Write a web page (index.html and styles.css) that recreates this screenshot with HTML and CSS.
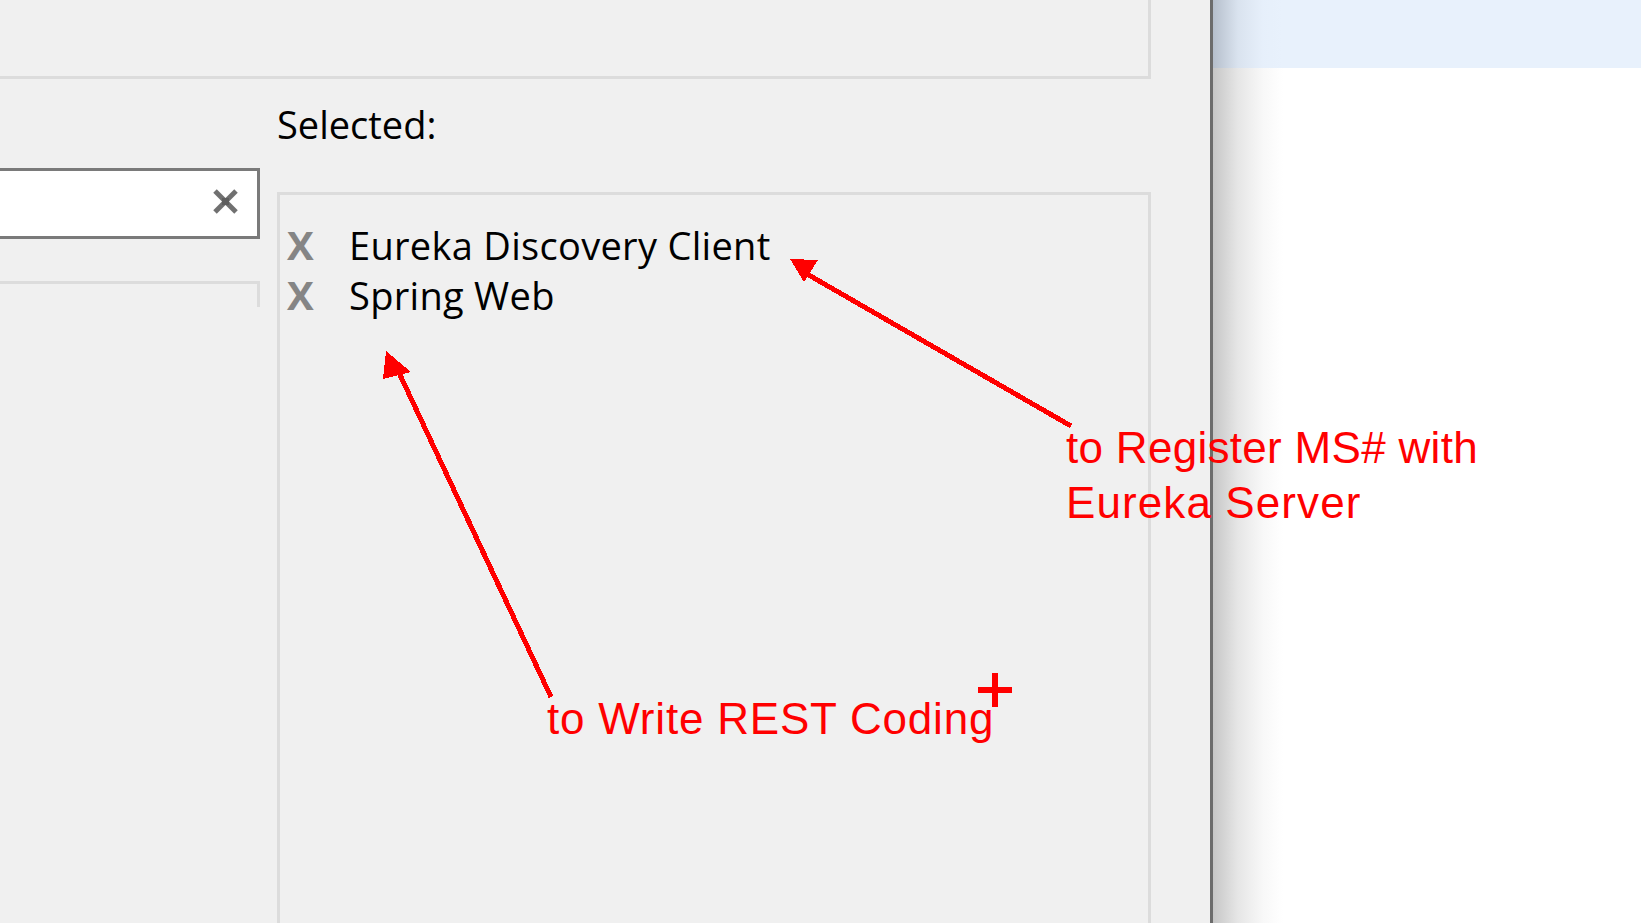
FILE: index.html
```html
<!DOCTYPE html>
<html>
<head>
<meta charset="utf-8">
<link rel="stylesheet" href="styles.css">
</head>
<body>
<div class="screen">
  <div class="dialog">
    <div class="top-panel"></div>
    <div class="content">
      <div class="left-col">
        <div class="search">
          <svg class="clear-icon" width="27" height="27" viewBox="0 0 27 27">
            <line x1="3" y1="3" x2="24" y2="24" stroke="#707070" stroke-width="5"/>
            <line x1="24" y1="3" x2="3" y2="24" stroke="#707070" stroke-width="5"/>
            <rect x="10" y="10" width="7" height="7" fill="#5e5e5e"/>
          </svg>
        </div>
        <div class="list-panel"></div>
      </div>
      <div class="right-col">
        <div class="sel-label">Selected:</div>
        <div class="sel-panel">
          <div class="sel-item"><span class="sel-x">X</span><span class="sel-name">Eureka Discovery Client</span></div>
          <div class="sel-item"><span class="sel-x">X</span><span class="sel-name">Spring Web</span></div>
        </div>
      </div>
    </div>
  </div>
  <div class="divider"></div>
  <div class="side">
    <div class="side-band"></div>
  </div>

  <svg class="arrows" width="1641" height="923" viewBox="0 0 1641 923" shape-rendering="crispEdges">
    <line x1="1071" y1="426" x2="800" y2="270" stroke="#ff0000" stroke-width="5"/>
    <polygon points="790,259 818,260 804,282" fill="#ff0000"/>
    <line x1="551" y1="697" x2="394" y2="362" stroke="#ff0000" stroke-width="5"/>
    <polygon points="386,351 411,372 383,379" fill="#ff0000"/>
    <rect x="978" y="687" width="34" height="6" fill="#ff0000"/>
    <rect x="992" y="673" width="6" height="34" fill="#ff0000"/>
  </svg>
  <div class="note note-register"><span class="note-line line-a">to Register MS# with</span><span class="note-line line-b">Eureka Server</span></div>
  <div class="note note-rest">to Write REST Coding</div>
</div>
</body>
</html>
```

FILE: styles.css
```css
html, body {
  margin: 0;
  padding: 0;
  width: 1641px;
  height: 923px;
  overflow: hidden;
  background: #ffffff;
}

.screen {
  position: relative;
  display: flex;
  width: 1641px;
  height: 923px;
  overflow: hidden;
}

.dialog {
  width: 1210px;
  flex: 0 0 1210px;
  background: #f0f0f0;
  display: flex;
  flex-direction: column;
}

.top-panel {
  width: 1148px;
  height: 76px;
  border-right: 3px solid #dcdcdc;
  border-bottom: 3px solid #dcdcdc;
}

.content {
  display: flex;
  gap: 17px;
  width: 1151px;
  flex: 1;
  align-items: stretch;
}

.left-col {
  width: 260px;
  flex: 0 0 260px;
  padding-top: 89px;
  display: flex;
  flex-direction: column;
}

.search {
  height: 65px;
  width: 257px;
  background: #ffffff;
  border-top: 3px solid #7a7a7a;
  border-bottom: 3px solid #7a7a7a;
  border-right: 3px solid #7a7a7a;
  display: flex;
  justify-content: flex-end;
  align-items: flex-start;
  box-sizing: content-box;
}

.clear-icon {
  margin-top: 17px;
  margin-right: 18px;
}

.list-panel {
  margin-top: 42px;
  height: 23px;
  width: 257px;
  border-top: 3px solid #dcdcdc;
  border-right: 3px solid #dcdcdc;
}

.right-col {
  flex: 1;
  display: flex;
  flex-direction: column;
  padding-top: 20px;
}

.sel-label {
  font-family: "Open Sans", sans-serif;
  font-size: 38px;
  line-height: 50px;
  color: #000000;
  height: 50px;
  margin-bottom: 43px;
}

.sel-panel {
  flex: 1;
  border-top: 3px solid #dcdcdc;
  border-left: 3px solid #dcdcdc;
  border-right: 3px solid #dcdcdc;
  padding-top: 25px;
  padding-left: 7px;
}

.sel-item {
  display: flex;
  height: 50px;
  font-family: "Open Sans", sans-serif;
  font-size: 38px;
  line-height: 50px;
  color: #000000;
}

.sel-name {
  letter-spacing: 0.3px;
}

.sel-x {
  width: 62px;
  font-weight: 700;
  font-size: 40px;
  color: #858585;
}

.divider {
  width: 3px;
  flex: 0 0 3px;
  background: #6c6c6c;
}

.side {
  flex: 1;
  background: linear-gradient(to right, #c6c6c6 0px, #e6e6e6 25px, #f8f8f8 50px, #ffffff 70px);
}

.side-band {
  height: 68px;
  background: linear-gradient(to right, rgba(120,130,145,0.45) 0px, rgba(160,170,185,0.2) 25px, rgba(200,210,225,0.05) 50px, rgba(232,241,252,0) 70px), #e8f1fc;
}

.arrows {
  position: absolute;
  left: 0;
  top: 0;
  pointer-events: none;
}

.note {
  position: absolute;
  font-family: "Liberation Sans", Arial, sans-serif;
  font-size: 44px;
  line-height: 55px;
  letter-spacing: 0.8px;
  color: #ff0000;
  white-space: nowrap;
}

.note-line {
  display: block;
}

.line-a {
  letter-spacing: 0.3px;
}

.line-b {
  letter-spacing: 1.1px;
}

.note-register {
  left: 1066px;
  top: 420px;
}

.note-rest {
  left: 547px;
  top: 691px;
}
```
